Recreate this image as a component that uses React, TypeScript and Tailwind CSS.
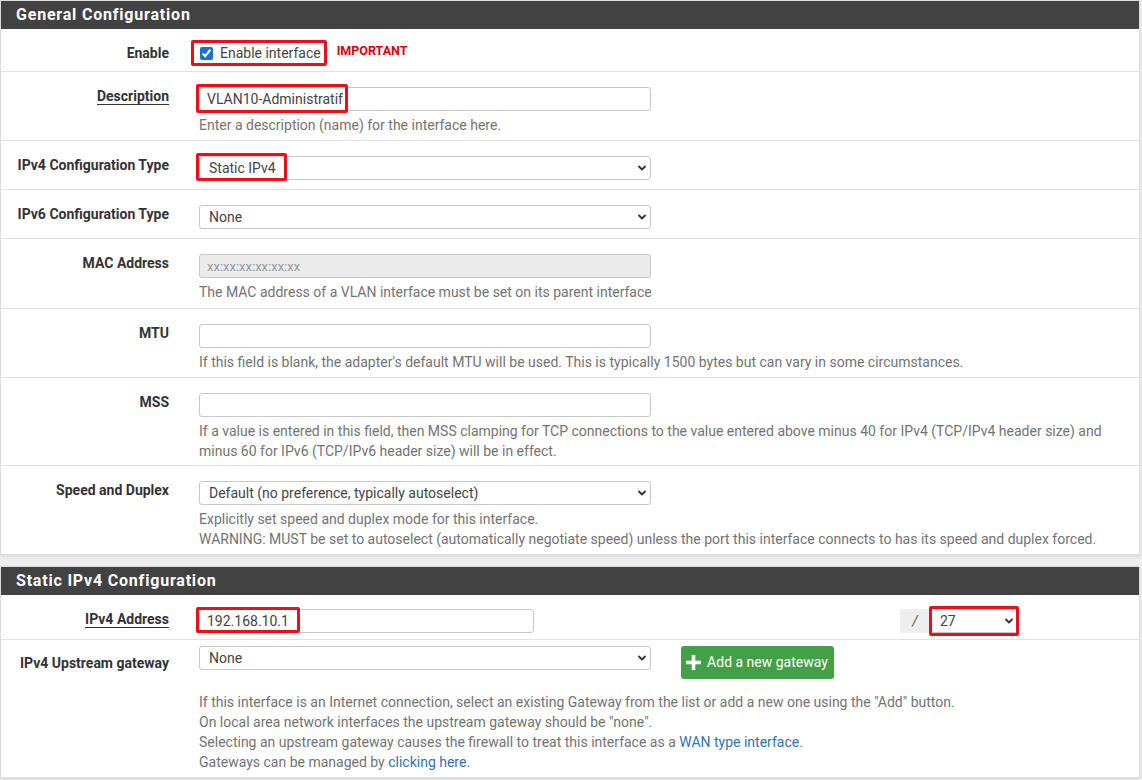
import type { ReactNode } from "react";

const FONT = { fontFamily: "Roboto, 'Noto Sans', sans-serif" };

function Chevron() {
  return (
    <svg className="pointer-events-none absolute right-[4px] top-1/2 -translate-y-1/2" width="10" height="10" viewBox="0 0 10 10">
      <path d="M2 3.5 L5 6.5 L8 3.5" fill="none" stroke="#333" strokeWidth="1.8" strokeLinecap="round" strokeLinejoin="round" />
    </svg>
  );
}

function RedBox({ className }: { className: string }) {
  return <div className={`pointer-events-none absolute rounded-[2px] border-[3px] border-[#e8101a] ${className}`} />;
}

function Select({ value, width, children }: { value: string; width: string; children?: ReactNode }) {
  return (
    <div className={`relative h-[24px] ${width}`}>
      <select
        defaultValue={value}
        className="h-full w-full appearance-none rounded-[3px] border border-[#c8c8c8] bg-white pl-[9px] text-[14px] leading-[22px] text-[#444] outline-none"
      >
        <option>{value}</option>
      </select>
      <Chevron />
      {children}
    </div>
  );
}

function TextInput({ value, placeholder, disabled, width = "w-[452px]", children }: { value?: string; placeholder?: string; disabled?: boolean; width?: string; children?: ReactNode }) {
  return (
    <div className={`relative h-[24px] ${width}`}>
      <input
        defaultValue={value}
        placeholder={placeholder}
        disabled={disabled}
        className={`h-full w-full rounded-[3px] border border-[#c8c8c8] px-[7px] text-[14px] text-[#444] outline-none placeholder:text-[13px] placeholder:text-[#9a9a9a] ${disabled ? "bg-[#ebebeb]" : "bg-white"}`}
      />
      {children}
    </div>
  );
}

function Help({ children }: { children: ReactNode }) {
  return <div className="mt-[4px] whitespace-nowrap text-[14px] leading-[20px] text-[#737373]">{children}</div>;
}

function Row({ label, underline, children, pb = "pb-[5px]", last }: { label: string; underline?: boolean; children: ReactNode; pb?: string; last?: boolean }) {
  return (
    <div className={`flex ${last ? "" : "border-b border-[#e2e2e2]"} pt-[15px] ${pb}`}>
      <div className="w-[183px] shrink-0 pr-[15px] text-right">
        <span className="-mt-px block text-[14px] font-bold leading-[20px] text-[#333]">
          <span className={underline ? "border-b border-[#333]" : ""}>{label}</span>
        </span>
      </div>
      <div className="pl-[15px]">{children}</div>
    </div>
  );
}

function Panel({ title, children }: { title: string; children: ReactNode }) {
  return (
    <div className="w-[1140px] border border-[#dcdcdc] bg-white shadow-[0_2px_3px_rgba(0,0,0,0.08)]">
      <div className="flex h-[28px] items-center bg-[#424242] px-[15px] text-[16px] font-bold tracking-[0.8px] text-white">{title}</div>
      {children}
    </div>
  );
}

export default function App() {
  return (
    <div style={FONT} className="min-h-[780px] bg-[#eeeeee]">
      <Panel title="General Configuration">
        <div className="flex border-b border-[#e2e2e2] pb-[8px] pt-[14px]">
          <div className="w-[183px] shrink-0 pr-[15px] text-right text-[14px] font-bold leading-[20px] text-[#333]">Enable</div>
          <div className="flex items-center pl-[15px]">
            <label className="relative flex items-center gap-[7px] text-[14px] leading-[20px] text-[#444]">
              <input type="checkbox" defaultChecked className="ml-px h-[13px] w-[13px] accent-[#1a6fd8]" />
              Enable interface
              <RedBox className="-left-[8px] -top-[3px] h-[26px] w-[136px]" />
            </label>
            <span className="ml-[16px] -mt-[4px] text-[12.5px] font-bold text-[#e00000]">IMPORTANT</span>
          </div>
        </div>

        <Row label="Description" underline>
          <TextInput value="VLAN10-Administratif">
            <RedBox className="-left-[3px] -top-[3px] h-[29px] w-[152px]" />
          </TextInput>
          <Help>Enter a description (name) for the interface here.</Help>
        </Row>

        <Row label="IPv4 Configuration Type" pb="pb-[9px]">
          <Select value="Static IPv4" width="w-[452px]">
            <RedBox className="-left-[3px] -top-[3px] h-[28px] w-[91px]" />
          </Select>
        </Row>

        <Row label="IPv6 Configuration Type" pb="pb-[9px]">
          <Select value="None" width="w-[452px]" />
        </Row>

        <Row label="MAC Address" pb="pb-[6px]">
          <TextInput placeholder="xx:xx:xx:xx:xx:xx" disabled />
          <Help>The MAC address of a VLAN interface must be set on its parent interface</Help>
        </Row>

        <Row label="MTU">
          <TextInput />
          <Help>If this field is blank, the adapter's default MTU will be used. This is typically 1500 bytes but can vary in some circumstances.</Help>
        </Row>

        <Row label="MSS" pb="pb-[4px]">
          <TextInput />
          <Help>
            If a value is entered in this field, then MSS clamping for TCP connections to the value entered above minus 40 for IPv4 (TCP/IPv4 header size) and
            <br />
            minus 60 for IPv6 (TCP/IPv6 header size) will be in effect.
          </Help>
        </Row>

        <Row label="Speed and Duplex" pb="pb-[5px]" last>
          <Select value="Default (no preference, typically autoselect)" width="w-[452px]" />
          <Help>
            Explicitly set speed and duplex mode for this interface.
            <br />
            WARNING: MUST be set to autoselect (automatically negotiate speed) unless the port this interface connects to has its speed and duplex forced.
          </Help>
        </Row>
      </Panel>

      <div className="h-[11px]" />

      <Panel title="Static IPv4 Configuration">
        <div className="flex border-b border-[#e2e2e2] pb-[6px] pt-[14px]">
          <div className="w-[183px] shrink-0 pr-[15px] text-right text-[14px] font-bold leading-[20px] text-[#333]">
            <span className="border-b border-[#333]">IPv4 Address</span>
          </div>
          <div className="flex w-[834px] items-center justify-between pl-[15px]">
            <TextInput value="192.168.10.1" width="w-[335px]">
              <RedBox className="-left-[3px] -top-[2px] h-[26px] w-[104px]" />
            </TextInput>
            <div className="flex h-[24px]">
              <div className="flex w-[30px] items-center justify-center bg-[#eeeeee] text-[14px] italic text-[#555]">/</div>
              <Select value="27" width="w-[88px]">
                <RedBox className="-left-[1px] -top-[3px] h-[30px] w-[90px]" />
              </Select>
            </div>
          </div>
        </div>

        <div className="flex pb-[5px] pt-[6px]">
          <div className="w-[183px] shrink-0 pr-[15px] pt-[7px] text-right text-[14px] font-bold leading-[20px] text-[#333]">IPv4 Upstream gateway</div>
          <div className="pl-[15px]">
            <div className="flex items-start gap-[30px]">
              <Select value="None" width="w-[452px]" />
              <button className="flex h-[33px] w-[153px] items-center justify-center gap-[5px] rounded-[3px] bg-[#43a047] pr-[2px] text-[14px] text-white">
                <svg width="17" height="17" viewBox="0 0 17 17">
                  <path d="M8.5 1 V16 M1 8.5 H16" stroke="white" strokeWidth="3.6" />
                </svg>
                Add a new gateway
              </button>
            </div>
            <div className="mt-[13px] whitespace-nowrap text-[14px] leading-[20px] text-[#737373]">
              If this interface is an Internet connection, select an existing Gateway from the list or add a new one using the "Add" button.
              <br />
              On local area network interfaces the upstream gateway should be "none".
              <br />
              Selecting an upstream gateway causes the firewall to treat this interface as a <span className="text-[#3172b5]">WAN type interface</span>.
              <br />
              Gateways can be managed by <span className="text-[#3172b5]">clicking here</span>.
            </div>
          </div>
        </div>
      </Panel>
    </div>
  );
}
